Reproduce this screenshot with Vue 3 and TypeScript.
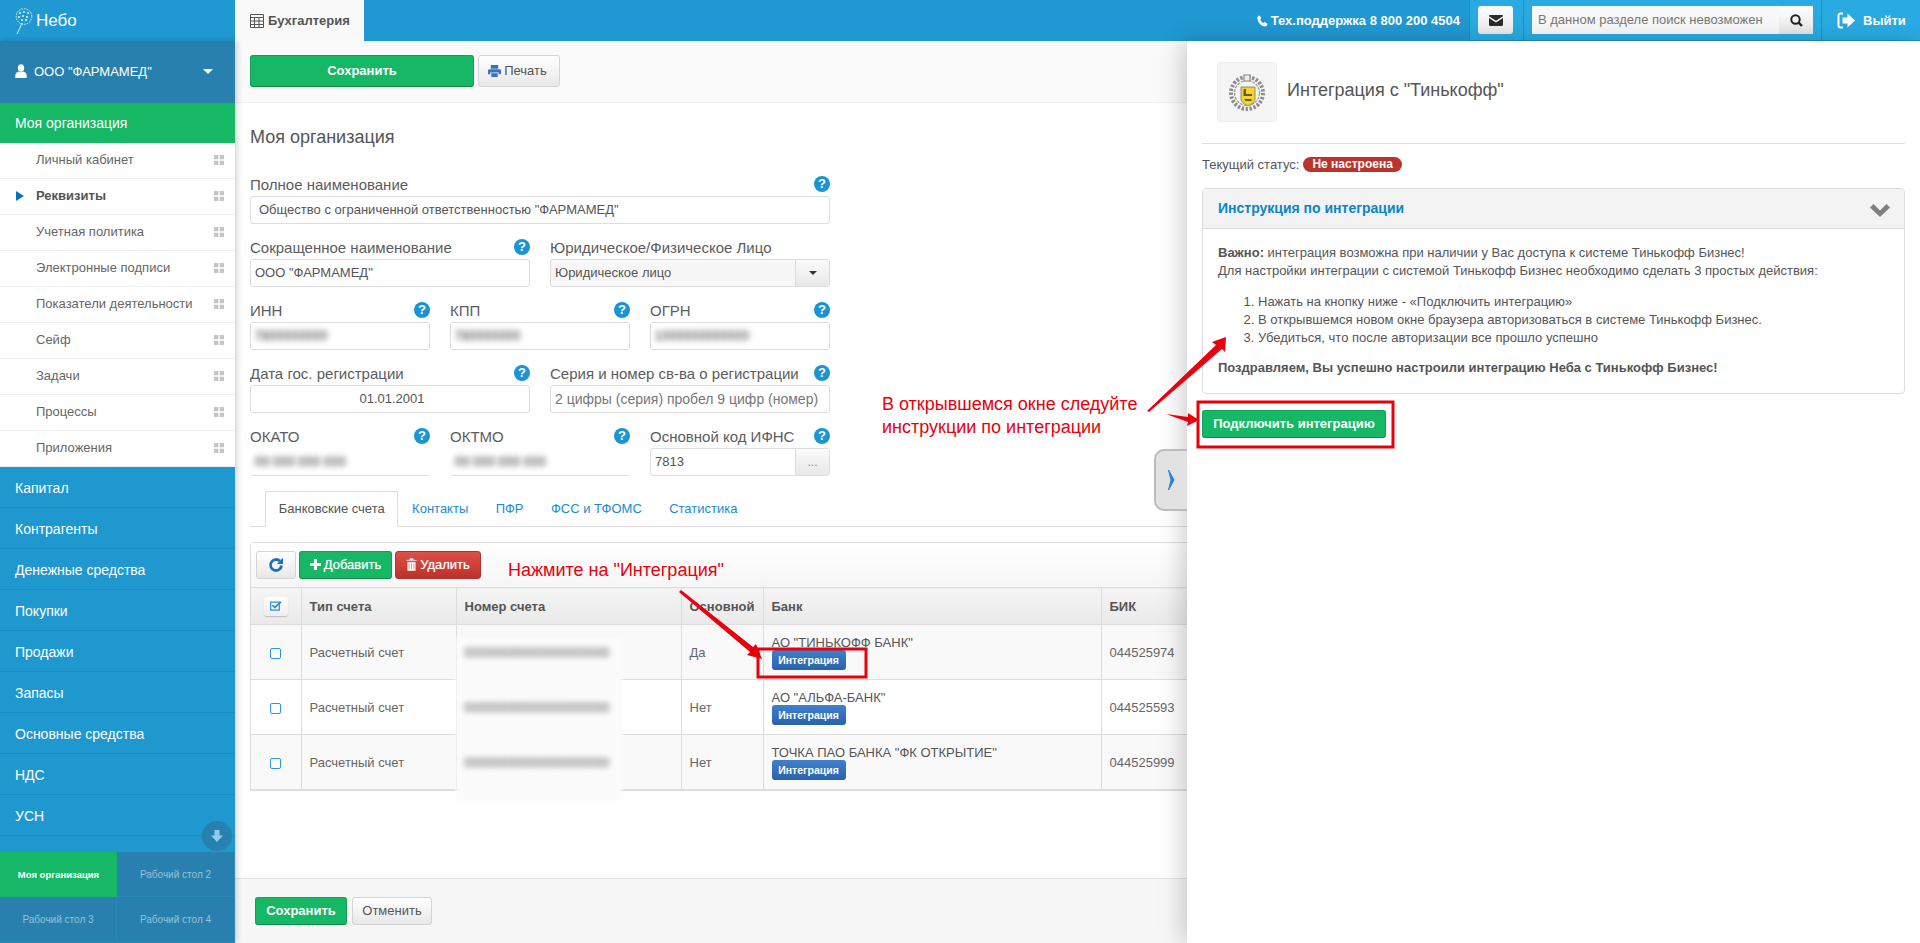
<template>
  <div class="page">
    <header class="topbar">
      <div class="brand">
        <svg class="brand-mark" width="20" height="28" viewBox="0 0 20 28">
          <circle cx="10" cy="8.500" r="7.800" fill="none" stroke="#fff" stroke-width="0.800" stroke-dasharray="1.600 1" />
          <circle v-for="d in dandelionDots" :key="d[0] + '-' + d[1]" :cx="d[0]" :cy="d[1]" r="0.900" fill="#fff" />
          <path d="M8 15 Q6 20 3 26" fill="none" stroke="#fff" stroke-width="0.800" />
        </svg>
        <span>Небо</span>
      </div>
      <div class="app-tab">
        <svg width="14" height="14" viewBox="0 0 14 14">
          <path d="M.5 .5h13v13H.5zM.5 3.500h13M.5 7h13M.5 10.500h13M4.500 3.500v10M9 3.500v10" fill="none" stroke="#555" />
        </svg>
        Бухгалтерия
      </div>
      <div class="support">
        <svg width="11" height="12" viewBox="0 0 11 12">
          <path d="M2.600 .4 4.300 3 3.200 4.400c.6 1.600 1.800 2.900 3.300 3.600l1.200-1 2.800 1.700c-.2 1.500-1.200 2.800-2.600 2.800C4 11.500 .4 7 .4 2.800 .4 1.600 1.300 .6 2.600 .4z" fill="#fff" />
        </svg>
        Тех.поддержка 8 800 200 4504
      </div>
      <div class="top-tools">
        <div class="mail-cell">
          <button class="mail-btn">
            <svg width="14" height="11" viewBox="0 0 14 11">
              <path d="M0 1.200C0 .5.500 0 1.200 0h11.600c.7 0 1.200.5 1.200 1.200L7 5.800zM0 3l7 4.500L14 3v6.800c0 .7-.5 1.200-1.200 1.200H1.200C.5 11 0 10.500 0 9.800z" fill="#2b2b2b" />
            </svg>
          </button>
        </div>
        <div class="search-cell">
          <div class="search">
            <span class="search-input">В данном разделе поиск невозможен</span>
            <span class="search-btn">
              <svg width="13" height="13" viewBox="0 0 13 13">
                <circle cx="5.500" cy="5.500" r="4.200" fill="none" stroke="#222" stroke-width="2" />
                <path d="m8.500 8.500 3.500 3.500" stroke="#222" stroke-width="2.400" />
              </svg>
            </span>
          </div>
        </div>
        <div class="logout">
          <svg width="19" height="17" viewBox="0 0 19 17">
            <path d="M6 1.500H3.500a2 2 0 0 0-2 2v10a2 2 0 0 0 2 2H6" fill="none" stroke="#fff" stroke-width="2" />
            <path d="M5.500 5.500h5V1.500L18 8.500l-7.500 7v-4h-5z" fill="#fff" />
          </svg>
          Выйти
        </div>
      </div>
    </header>

    <div class="body">
      <aside class="sidebar">
        <div class="org">
          <svg width="12" height="14" viewBox="0 0 12 14">
            <ellipse cx="6" cy="4" rx="3.200" ry="3.800" fill="#fff" />
            <path d="M.3 14v-2.500C.3 9.300 2 8 3.800 7.600c1.300 1 3.100 1 4.400 0C10 8 11.700 9.300 11.700 11.500V14z" fill="#fff" />
          </svg>
          <span class="org-name">ООО "ФАРМАМЕД"</span>
          <i class="org-caret"></i>
        </div>
        <div class="nav">
          <div class="nav-active">Моя организация</div>
          <div v-for="item in subItems" :key="item" class="sub-item" :class="{ current: item === 'Реквизиты' }">
            <i v-if="item === 'Реквизиты'" class="sub-arrow"></i>
            <span>{{ item }}</span>
            <svg class="grip" width="10" height="10" viewBox="0 0 10 10">
              <path d="M0 0h4.300v4.300H0zM5.700 0H10v4.300H5.700zM0 5.700h4.300V10H0zM5.700 5.700H10V10H5.700z" fill="#c4c4c4" />
            </svg>
          </div>
          <div v-for="item in mainItems" :key="item" class="main-item">{{ item }}</div>
          <div class="main-item"></div>
          <div class="scroll-down">
            <svg width="14" height="14" viewBox="0 0 14 14">
              <path d="M4.500 1h5v5.500H13L7 13 1 6.500h3.500z" fill="#8fcbea" />
            </svg>
          </div>
        </div>
        <div class="desks">
          <div v-for="(desk, i) in desks" :key="desk" class="desk" :class="{ on: i === 0 }">{{ desk }}</div>
        </div>
      </aside>

      <main class="main">
        <div class="toolbar">
          <button class="btn green wide">Сохранить</button>
          <button class="btn plain print">
            <svg width="13" height="12" viewBox="0 0 14 13">
              <path d="M3 0h8v4H3zM1.500 4.500h11c.8 0 1.500.7 1.500 1.500v4h-2.500V8h-9v2H0V6c0-.8.7-1.500 1.500-1.500zM3.500 9h7v4h-7z" fill="#3a74b8" />
            </svg>
            Печать
          </button>
        </div>

        <div class="content">
          <h1>Моя организация</h1>
          <div class="form">
            <div v-for="(row, r) in formRows" :key="r" class="form-row">
              <div v-for="f in row" :key="f.label" class="field">
                <div class="field-label">
                  <span>{{ f.label }}</span>
                  <b v-if="f.help !== false" class="help">?</b>
                </div>
                <div class="input" :class="[f.kind, { center: f.center, dim: f.dim }]">
                  <span class="value">{{ f.value }}</span>
                  <span v-if="f.kind === 'select'" class="addon"><i class="mini-caret"></i></span>
                  <span v-if="f.kind === 'lookup'" class="addon dots">...</span>
                </div>
              </div>
            </div>
          </div>

          <div class="tabs">
            <span class="tab active">Банковские счета</span>
            <span v-for="t in tabs" :key="t" class="tab">{{ t }}</span>
          </div>

          <div class="grid-box">
            <div class="grid-tools">
              <button class="btn plain refresh">
                <svg width="16" height="16" viewBox="0 0 16 16">
                  <path d="M13.500 8.500a5.500 5.500 0 1 1-1.600-4.400" fill="none" stroke="#1f6fb8" stroke-width="2.800" />
                  <path d="M15 .8V7H8.800z" fill="#1f6fb8" />
                </svg>
              </button>
              <button class="btn green small">
                <svg width="11" height="11" viewBox="0 0 11 11"><path d="M4 0h3v4h4v3H7v4H4V7H0V4h4z" fill="#fff" /></svg>
                Добавить
              </button>
              <button class="btn red small">
                <svg width="11" height="13" viewBox="0 0 10 12">
                  <path d="M3.500 0h3l.6 1.500H10v1.200H0V1.500h2.900zM1 3.500h8V12H1zM2.700 5v5.500M5 5v5.500M7.300 5v5.500" fill="#fff" stroke="#c9423c" stroke-width="0.500" />
                </svg>
                Удалить
              </button>
            </div>
            <table class="grid">
              <colgroup>
                <col style="width: 50px" />
                <col style="width: 155px" />
                <col style="width: 225px" />
                <col style="width: 82px" />
                <col style="width: 338px" />
                <col style="width: 150px" />
              </colgroup>
              <thead>
                <tr>
                  <th class="check-cell">
                    <span class="check-all">
                      <svg width="12" height="10" viewBox="0 0 12 10">
                        <path d="M.7 1.200h8.600v8H.7z" fill="none" stroke="#2d8fd0" stroke-width="1.200" />
                        <path d="m2.500 4 2.300 2.500L11 .8" fill="none" stroke="#2d8fd0" stroke-width="1.800" />
                      </svg>
                    </span>
                  </th>
                  <th>Тип счета</th>
                  <th>Номер счета</th>
                  <th>Основной</th>
                  <th>Банк</th>
                  <th>БИК</th>
                </tr>
              </thead>
              <tbody>
                <tr v-for="acc in accounts" :key="acc.bik">
                  <td class="check-cell"><i class="check"></i></td>
                  <td>Расчетный счет</td>
                  <td><span class="masked">{{ acc.number }}</span></td>
                  <td>{{ acc.main }}</td>
                  <td class="bank-cell">
                    <div>{{ acc.bank }}</div>
                    <button class="integrate">Интеграция</button>
                  </td>
                  <td>{{ acc.bik }}</td>
                </tr>
              </tbody>
            </table>
            <div class="mask-patch"></div>
          </div>
        </div>

        <div class="footer">
          <button class="btn green foot-save">Сохранить</button>
          <button class="btn plain foot-cancel">Отменить</button>
        </div>
      </main>

      <section class="panel">
        <div class="panel-handle">
          <svg width="10" height="22" viewBox="0 0 10 22">
            <path d="M1.500 1 7 11 1.500 21 4 11z" fill="#2f7fd6" stroke="#2f7fd6" stroke-width="1" />
          </svg>
        </div>
        <div class="panel-head">
          <div class="panel-logo">
            <svg width="40" height="38" viewBox="0 0 40 38">
              <circle cx="20" cy="20" r="16" fill="none" stroke="#8d8d8d" stroke-width="4" stroke-dasharray="2.400 1.600" />
              <circle cx="20" cy="20" r="12.500" fill="#f5f5f5" stroke="#9a9a9a" stroke-width="1.200" stroke-dasharray="3 1" />
              <path d="M17 2h6v6h-6z" fill="#eee" stroke="#888" stroke-width="1.200" />
              <path d="M14 14h14v12c0 3-3 5-7 7-4-2-7-4-7-7z" fill="#f6d428" stroke="#666" stroke-width="0.700" />
              <path d="M16.500 16h2.500v5h6v2h-8.500zM17 26h7.500v2h-6z" fill="#5c5c3a" />
            </svg>
          </div>
          <div class="panel-title">Интеграция с "Тинькофф"</div>
        </div>
        <div class="panel-status">
          <span>Текущий статус:</span>
          <span class="badge">Не настроена</span>
        </div>
        <div class="accordion">
          <div class="accordion-head">
            <span class="accordion-title">Инструкция по интеграции</span>
            <svg class="accordion-chevron" width="20" height="13" viewBox="0 0 20 13">
              <path d="M0 3.500 3.500 0 10 6.500 16.500 0 20 3.500 10 13z" fill="#808080" />
            </svg>
          </div>
          <div class="accordion-body">
            <p><b>Важно:</b> интеграция возможна при наличии у Вас доступа к системе Тинькофф Бизнес!</p>
            <p>Для настройки интеграции с системой Тинькофф Бизнес необходимо сделать 3 простых действия:</p>
            <ol>
              <li>Нажать на кнопку ниже - «Подключить интеграцию»</li>
              <li>В открывшемся новом окне браузера авторизоваться в системе Тинькофф Бизнес.</li>
              <li>Убедиться, что после авторизации все прошло успешно</li>
            </ol>
            <p><b>Поздравляем, Вы успешно настроили интеграцию Неба с Тинькофф Бизнес!</b></p>
          </div>
        </div>
        <button class="btn green connect">Подключить интеграцию</button>
      </section>
    </div>

    <!-- пометки поверх скриншота -->
    <div class="note note-one">Нажмите на "Интеграция"</div>
    <div class="note note-two">В открывшемся окне следуйте<br />инструкции по интеграции</div>
    <svg class="marks" width="1920" height="943" viewBox="0 0 1920 943">
      <rect x="758" y="649" width="108" height="28" fill="none" stroke="#e8000d" stroke-width="3" />
      <rect x="1198" y="402" width="195" height="45" fill="none" stroke="#e8000d" stroke-width="3" />
      <path d="M679 592 681 590 753 647 756 644 762 659 747 655 750 652z" fill="#e8000d" />
      <path d="M1147 411 1149 412 1222 349 1225 352 1226 337 1212 342 1216 345z" fill="#e8000d" />
      <path d="M1166 414 1188 417 1188 413 1199 420 1187 426 1188 422z" fill="#e8000d" />
    </svg>
  </div>
</template>

<script setup lang="ts">
interface Field {
  label: string
  value: string
  help?: boolean
  kind?: string
  center?: boolean
  dim?: boolean
}

interface Account {
  number: string
  main: string
  bank: string
  bik: string
}

const dandelionDots = [
  [10, 4], [6, 5], [14, 5], [5, 9], [9, 8], [13, 9], [8, 12], [12, 12],
]

const subItems = [
  'Личный кабинет',
  'Реквизиты',
  'Учетная политика',
  'Электронные подписи',
  'Показатели деятельности',
  'Сейф',
  'Задачи',
  'Процессы',
  'Приложения',
]

const mainItems = [
  'Капитал',
  'Контрагенты',
  'Денежные средства',
  'Покупки',
  'Продажи',
  'Запасы',
  'Основные средства',
  'НДС',
  'УСН',
]

const desks = ['Моя организация', 'Рабочий стол 2', 'Рабочий стол 3', 'Рабочий стол 4']

const tabs = ['Контакты', 'ПФР', 'ФСС и ТФОМС', 'Статистика']

const formRows: Field[][] = [
  [{ label: 'Полное наименование', value: 'Общество с ограниченной ответственностью "ФАРМАМЕД"', kind: 'wide' }],
  [
    { label: 'Сокращенное наименование', value: 'ООО "ФАРМАМЕД"' },
    { label: 'Юридическое/Физическое Лицо', value: 'Юридическое лицо', help: false, kind: 'select' },
  ],
  [
    { label: 'ИНН', value: '7800000000', kind: 'blurred' },
    { label: 'КПП', value: '780000000', kind: 'blurred' },
    { label: 'ОГРН', value: '1000000000000', kind: 'blurred' },
  ],
  [
    { label: 'Дата гос. регистрации', value: '01.01.2001', center: true },
    { label: 'Серия и номер св-ва о регистрации', value: '2 цифры (серия) пробел 9 цифр (номер)', dim: true },
  ],
  [
    { label: 'ОКАТО', value: '00 000 000 000', kind: 'blurred open' },
    { label: 'ОКТМО', value: '00 000 000 000', kind: 'blurred open' },
    { label: 'Основной код ИФНС', value: '7813', kind: 'lookup' },
  ],
]

const accounts: Account[] = [
  { number: '00000000000000000000', main: 'Да', bank: 'АО "ТИНЬКОФФ БАНК"', bik: '044525974' },
  { number: '00000000000000000000', main: 'Нет', bank: 'АО "АЛЬФА-БАНК"', bik: '044525593' },
  { number: '00000000000000000000', main: 'Нет', bank: 'ТОЧКА ПАО БАНКА "ФК ОТКРЫТИЕ"', bik: '044525999' },
]
</script>

<style>
html,
body {
  margin: 0;
  background: #fff;
}
</style>

<style scoped>
.page {
  position: relative;
  display: flex;
  flex-direction: column;
  height: 943px;
  overflow: hidden;
  font-family: "Liberation Sans", Arial, sans-serif;
  font-size: 13px;
  color: #555;
}
button {
  font-family: inherit;
  cursor: pointer;
}

/* header */
.topbar {
  display: flex;
  flex: none;
  align-items: stretch;
  height: 41px;
  background: #2098d1;
  color: #fff;
}
.brand {
  display: flex;
  align-items: center;
  gap: 2px;
  width: 235px;
  padding-left: 14px;
  box-sizing: border-box;
  font-size: 17px;
}
.brand-mark {
  margin-top: 3px;
}
.app-tab {
  display: flex;
  align-items: center;
  gap: 4px;
  width: 129px;
  padding: 0 0 0 15px;
  box-sizing: border-box;
  background: #f9f9f9;
  color: #555;
  font-weight: bold;
  font-size: 13px;
}
.support {
  display: flex;
  align-items: center;
  gap: 3px;
  margin-left: auto;
  padding-right: 9px;
  font-weight: bold;
  font-size: 13px;
}
.top-tools {
  display: flex;
  background: #29abe2;
  border-bottom: 1px solid #1f8fc6;
}
.mail-cell,
.search-cell {
  display: flex;
  align-items: center;
  border-left: 1px solid #1f8fc6;
  padding: 0 8px;
}
.mail-cell {
  padding-right: 10px;
}
.mail-btn {
  display: flex;
  align-items: center;
  justify-content: center;
  width: 35px;
  height: 28px;
  padding: 0;
  border: 0;
  border-radius: 3px;
  background: linear-gradient(#fff, #e9e9e9);
}
.search {
  display: flex;
  width: 281px;
  height: 28px;
}
.search-input {
  flex: 1;
  padding-left: 6px;
  background: #f8f8f8;
  color: #777;
  font-size: 13px;
  line-height: 27px;
}
.search-btn {
  display: flex;
  align-items: center;
  justify-content: center;
  width: 34px;
  background: linear-gradient(#fff, #e6e6e6);
}
.logout {
  display: flex;
  align-items: center;
  gap: 7px;
  width: 99px;
  padding-left: 15px;
  box-sizing: border-box;
  border-left: 1px solid #1f8fc6;
  font-weight: bold;
  font-size: 13px;
}

.body {
  position: relative;
  display: flex;
  flex: 1;
  min-height: 0;
}

/* sidebar */
.sidebar {
  position: relative;
  z-index: 1;
  display: flex;
  flex: none;
  flex-direction: column;
  width: 235px;
  box-shadow: 2px 0 6px rgba(0, 0, 0, 0.18);
}
.org {
  display: flex;
  flex: none;
  align-items: center;
  height: 62px;
  padding: 0 15px 2px;
  box-sizing: border-box;
  background: #2780ae;
  color: #fff;
  font-size: 13px;
}
.org-name {
  margin-left: 7px;
}
.org-caret {
  margin-left: auto;
  margin-right: 7px;
  border-top: 5px solid #fff;
  border-left: 5px solid transparent;
  border-right: 5px solid transparent;
}
.nav {
  position: relative;
  flex: 1;
  min-height: 0;
  overflow: hidden;
  background: #1f97cf;
}
.nav-active {
  height: 40px;
  padding-left: 15px;
  background: #16b765;
  color: #fff;
  font-size: 14px;
  line-height: 40px;
}
.sub-item {
  position: relative;
  display: flex;
  align-items: center;
  justify-content: space-between;
  height: 36px;
  padding: 0 11px 2px 36px;
  box-sizing: border-box;
  background: #fff;
  border-bottom: 1px solid #f0f0f0;
  color: #666;
  font-size: 13px;
}
.sub-item.current {
  font-weight: bold;
  color: #555;
}
.sub-arrow {
  position: absolute;
  left: 16px;
  top: 12px;
  border-left: 8px solid #0a6fc2;
  border-top: 5px solid transparent;
  border-bottom: 5px solid transparent;
}
.main-item {
  height: 41px;
  padding-left: 15px;
  box-sizing: border-box;
  border-bottom: 1px solid #1c8dc4;
  color: #fff;
  font-size: 14px;
  line-height: 42px;
}
.scroll-down {
  position: absolute;
  right: 3px;
  bottom: 1px;
  display: flex;
  align-items: center;
  justify-content: center;
  width: 30px;
  height: 30px;
  border-radius: 50%;
  background: #2780ae;
}
.desks {
  display: grid;
  flex: none;
  grid-template-columns: 117px 118px;
  grid-template-rows: 45px 46px;
  background: #2780ae;
}
.desk {
  display: flex;
  align-items: center;
  justify-content: center;
  box-sizing: border-box;
  border-right: 1px solid #2b89b9;
  border-bottom: 1px solid #2b89b9;
  color: #9cc0d4;
  font-size: 10px;
}
.desk.on {
  border: 0;
  background: #16b765;
  color: #fff;
  font-weight: bold;
  font-size: 9.500px;
}

/* main */
.main {
  display: flex;
  flex: 1;
  flex-direction: column;
  min-width: 0;
  overflow: hidden;
}
.toolbar {
  display: flex;
  flex: none;
  gap: 4px;
  height: 62px;
  padding: 14px 15px 0;
  box-sizing: border-box;
  background: #fafafa;
  border-bottom: 1px solid #eee;
}
.btn {
  display: inline-flex;
  align-items: center;
  justify-content: center;
  gap: 4px;
  box-sizing: border-box;
  padding: 0 0 1px;
  border-radius: 3px;
  font-size: 13px;
}
.green {
  border: 1px solid #12a058;
  border-bottom-color: #0e8a4b;
  background: #16b765;
  color: #fff;
  font-weight: bold;
}
.plain {
  border: 1px solid #d4d4d4;
  background: linear-gradient(#fff, #e8e8e8);
  color: #555;
}
.red {
  border: 1px solid #b3332d;
  background: linear-gradient(#dd4f47, #bb322b);
  color: #fff;
}
.wide {
  width: 224px;
  height: 32px;
}
.print {
  width: 82px;
  height: 32px;
  gap: 3px;
  padding-right: 3px;
}
.content {
  flex: 1;
  min-height: 0;
  padding: 22px 0 0 15px;
}
h1 {
  margin: 0 0 27px;
  color: #555;
  font-weight: normal;
  font-size: 18px;
  line-height: 24px;
}
.form {
  width: 580px;
}
.form-row {
  display: flex;
  gap: 20px;
  margin-bottom: 15px;
}
.field {
  flex: 1;
  min-width: 0;
}
.field-label {
  display: flex;
  align-items: flex-start;
  justify-content: space-between;
  height: 20px;
  color: #5c5c5c;
  font-size: 15px;
  line-height: 17px;
}
.help {
  flex: none;
  width: 16px;
  height: 16px;
  border-radius: 50%;
  background: #1a94d2;
  color: #fff;
  font-size: 13px;
  line-height: 16px;
  text-align: center;
}
.input {
  position: relative;
  display: flex;
  align-items: center;
  height: 28px;
  padding: 0 0 1px 4px;
  box-sizing: border-box;
  border: 1px solid #ddd;
  border-radius: 3px;
  background: #fff;
  color: #555;
  font-size: 13px;
}
.input.wide {
  width: auto;
  height: 28px;
  padding-left: 8px;
}
.input.center {
  justify-content: center;
}
.input.dim {
  color: #777;
  font-size: 14px;
}
.input.select {
  background: #f7f7f7;
}
.value {
  flex: 1;
}
.center .value {
  flex: none;
}
.blurred .value {
  color: transparent;
  text-shadow: 0 0 5px #777, 0 0 7px #999;
}
.open {
  border-top-color: transparent;
  border-left-color: transparent;
  border-right-color: #fff;
}
.addon {
  display: flex;
  flex: none;
  align-items: center;
  justify-content: center;
  align-self: stretch;
  width: 33px;
  margin-bottom: -1px;
  border-left: 1px solid #ddd;
  background: linear-gradient(#fbfbfb, #e8e8e8);
}
.dots {
  color: #888;
  font-size: 12px;
}
.mini-caret {
  border-top: 4px solid #333;
  border-left: 4px solid transparent;
  border-right: 4px solid transparent;
}

/* tabs */
.tabs {
  display: flex;
  height: 36px;
  width: 1000px;
  padding-left: 15px;
  box-sizing: border-box;
  border-bottom: 1px solid #ddd;
}
.tab {
  height: 36px;
  padding: 0 12.700px;
  box-sizing: border-box;
  border: 1px solid transparent;
  color: #1a8ccb;
  font-size: 13px;
  line-height: 33px;
}
.tab.active {
  border-color: #ddd;
  border-bottom-color: #fff;
  border-radius: 3px 3px 0 0;
  background: #fff;
  color: #555;
}

/* table */
.grid-box {
  position: relative;
  width: 1000px;
  margin-top: 15px;
  border: 1px solid #ddd;
  border-right: 0;
  border-radius: 4px 0 0 0;
}
.grid-tools {
  display: flex;
  gap: 3px;
  align-items: center;
  height: 44px;
  padding: 0 0 0 5px;
  box-sizing: border-box;
  background: linear-gradient(#fff, #f6f6f6);
}
.refresh {
  width: 40px;
  height: 28px;
}
.small {
  gap: 3px;
  height: 28px;
  font-weight: normal;
  text-shadow: 0 0 1px rgba(255, 255, 255, 0.6);
}
.green.small {
  width: 93px;
  font-weight: normal;
}
.red.small {
  width: 86px;
}
.grid {
  width: 1000px;
  table-layout: fixed;
  border-collapse: collapse;
  font-size: 13px;
}
.grid th,
.grid td {
  box-sizing: border-box;
  padding: 0 8px;
  border: 1px solid #ddd;
  text-align: left;
}
.grid th:first-child,
.grid td:first-child {
  border-left: 0;
}
.grid th {
  height: 37px;
  background: linear-gradient(#f5f5f5, #e9e9e9);
  color: #555;
  font-weight: bold;
}
.grid td {
  height: 55px;
  color: #666;
}
.grid tbody tr:nth-child(odd) td {
  background: #f9f9f9;
}
.grid .check-cell {
  padding: 0;
  text-align: center;
}
.check-all {
  display: inline-flex;
  align-items: center;
  justify-content: center;
  width: 24px;
  height: 19px;
  border-radius: 3px;
  box-shadow: 0 1px 1px rgba(0, 0, 0, 0.2);
  background: linear-gradient(#fff, #eee);
  vertical-align: middle;
}
.check {
  display: inline-block;
  width: 11px;
  height: 11px;
  box-sizing: border-box;
  border: 1.500px solid #2a9ad6;
  border-radius: 2px;
  background: #fff;
  vertical-align: middle;
}
.masked {
  position: relative;
  z-index: 1;
  color: transparent;
  text-shadow: 0 0 5px #888, 0 0 7px #aaa;
}
.bank-cell div {
  color: #555;
  font-size: 13px;
  line-height: 15px;
}
.integrate {
  display: block;
  width: 74px;
  height: 20px;
  padding: 0;
  border: 0;
  border-radius: 3px;
  background: linear-gradient(#3f80cc, #2a62ab);
  color: #fff;
  font-weight: bold;
  font-size: 10.500px;
}
.mask-patch {
  position: absolute;
  left: 205px;
  top: 94px;
  width: 166px;
  height: 164px;
  background: #fbfbfb;
  filter: blur(2px);
}

/* footer */
.footer {
  display: flex;
  flex: none;
  gap: 5px;
  height: 65px;
  padding: 18px 20px 0;
  box-sizing: border-box;
  background: #f7f7f7;
  border-top: 1px solid #e4e4e4;
}
.foot-save {
  width: 92px;
  height: 28px;
}
.foot-cancel {
  width: 80px;
  height: 28px;
  font-size: 13px;
}

/* side panel */
.panel {
  position: absolute;
  right: 0;
  top: 0;
  bottom: 0;
  z-index: 2;
  width: 733px;
  padding: 21px 15px 0;
  box-sizing: border-box;
  background: #fff;
  box-shadow: -6px 0 22px rgba(0, 0, 0, 0.18);
}
.panel-handle {
  position: absolute;
  left: -33px;
  top: 408px;
  display: flex;
  align-items: center;
  justify-content: center;
  width: 33px;
  height: 62px;
  box-sizing: border-box;
  border: 2px solid #bbb;
  border-right: 0;
  border-radius: 10px 0 0 10px;
  background: #e2e2e2;
}
.panel-head {
  display: flex;
  align-items: center;
  gap: 10px;
  height: 82px;
  padding: 0 0 22px 15px;
  box-sizing: border-box;
  border-bottom: 1px solid #ddd;
}
.panel-logo {
  display: flex;
  align-items: center;
  justify-content: center;
  width: 60px;
  height: 60px;
  border-radius: 3px;
  border: 1px solid #eee;
  box-sizing: border-box;
  background: #f5f5f5;
}
.panel-title {
  padding-bottom: 2px;
  color: #555;
  font-size: 18px;
}
.panel-status {
  display: flex;
  align-items: center;
  gap: 4px;
  height: 16px;
  margin: 12px 0 16px;
  font-size: 13px;
}
.badge {
  padding: 0 9px;
  border-radius: 8px;
  background: #b9342c;
  color: #fff;
  font-weight: bold;
  font-size: 12px;
  line-height: 15px;
}
.accordion {
  border: 1px solid #ddd;
  border-radius: 4px;
}
.accordion-head {
  display: flex;
  align-items: center;
  justify-content: space-between;
  height: 40px;
  padding: 0 14px 0 15px;
  box-sizing: border-box;
  border-bottom: 1px solid #ddd;
  background: #f3f3f3;
  color: #0a85c7;
  font-weight: bold;
  font-size: 14px;
}
.accordion-title {
  margin-top: -2px;
}
.accordion-chevron {
  margin-top: 4px;
}
.accordion-body {
  height: 164px;
  padding: 15px 15px 0;
  box-sizing: border-box;
  font-size: 13px;
  line-height: 18px;
}
.accordion-body p {
  margin: 0;
}
.accordion-body ol {
  margin: 13px 0 12px;
  padding-left: 40px;
}
.connect {
  width: 184px;
  height: 28px;
  margin-top: 16px;
  padding-bottom: 2px;
  font-size: 13px;
}

/* annotations */
.note {
  position: absolute;
  z-index: 3;
  color: #e8000d;
  font-size: 18px;
  line-height: 23px;
}
.note-one {
  left: 508px;
  top: 559px;
}
.note-two {
  left: 882px;
  top: 393px;
}
.marks {
  position: absolute;
  left: 0;
  top: 0;
  z-index: 3;
  pointer-events: none;
}
</style>
